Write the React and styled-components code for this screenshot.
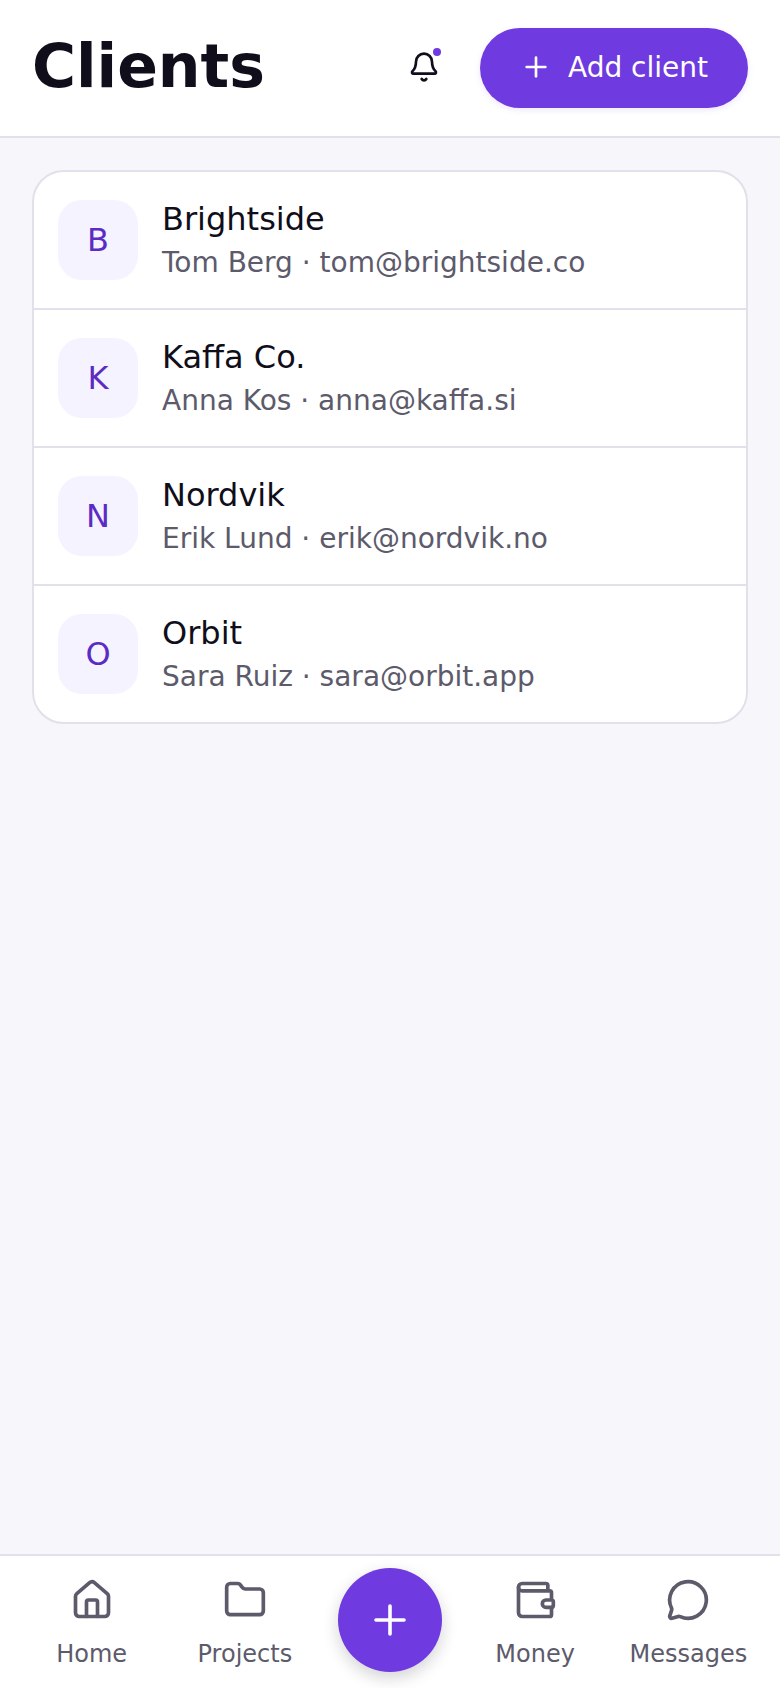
import React from "react";
import styled, { createGlobalStyle } from "styled-components";
import { Bell, Plus, House, Folder, Wallet, MessageCircle } from "lucide-react";

const Global = createGlobalStyle`
  html, body { margin: 0; padding: 0; }
  body { font-family: "DejaVu Sans", sans-serif; background: #f7f6fb; }
  * { box-sizing: border-box; }
`;
const Page = styled.div`
  width: 780px; height: 1688px; display: flex; flex-direction: column; background: #f7f6fb;
`;
const Header = styled.header`
  height: 138px; flex: none; display: flex; align-items: center; padding: 0 32px;
  background: #fff; border-bottom: 2px solid #e2e0ea;
`;
const Title = styled.h1`
  margin: 0 0 4px; flex: 1; font-size: 60px; line-height: 72px; font-weight: 700; color: #100e1a;
`;
const BellButton = styled.div`
  position: relative; width: 72px; height: 72px; margin-right: 20px; padding-bottom: 2px;
  display: flex; align-items: center; justify-content: center; color: #100e1a;
`;
const Dot = styled.span`
  position: absolute; left: 45px; top: 16px; width: 8px; height: 8px; border-radius: 50%; background: #6f3adf;
`;
const AddButton = styled.button`
  width: 268px; height: 80px; border: 0; border-radius: 40px; background: #6f3adf; color: #fff;
  display: flex; align-items: center; justify-content: center; gap: 16px;
  font: 500 28px "DejaVu Sans", sans-serif; box-shadow: 0 2px 6px rgba(111, 58, 223, 0.12); padding: 0 0 2px;
`;
const Content = styled.main`
  flex: 1; padding: 32px;
`;
const Card = styled.section`
  background: #fff; border: 2px solid #e2e0ea; border-radius: 32px; overflow: hidden;
`;
const Row = styled.div`
  height: 136px; display: flex; align-items: center; gap: 24px; padding: 0 24px;
  & + & { height: 138px; border-top: 2px solid #e2e0ea; }
`;
const Avatar = styled.div`
  width: 80px; height: 80px; flex: none; border-radius: 24px; background: #f5f3ff; color: #5b2bc4;
  display: flex; align-items: center; justify-content: center; font-size: 32px; padding-bottom: 1px;
`;
const Info = styled.div`
  display: flex; flex-direction: column; gap: 4px; padding-top: 2px;
`;
const Name = styled.div`
  font-size: 32px; line-height: 40px; color: #100e1a;
`;
const Detail = styled.div`
  font-size: 28px; line-height: 40px; color: #5c5a6b;
`;
const Nav = styled.nav`
  height: 134px; flex: none; background: #fff; border-top: 2px solid #e2e0ea;
  display: grid; grid-template-columns: 1fr 1fr 137px 1fr 1fr; padding: 0 15px; align-items: start;
`;
const NavItem = styled.div`
  display: flex; flex-direction: column; align-items: center; gap: 16px; padding-top: 22px;
  color: #5c5a6b; font-size: 24px; line-height: 32px; white-space: nowrap;
`;
const FabCell = styled.div`
  display: flex; justify-content: center; padding-top: 12px;
`;
const Fab = styled.button`
  width: 104px; height: 104px; border: 0; border-radius: 50%; background: #6f3adf; color: #fff; padding: 0;
  display: flex; align-items: center; justify-content: center; box-shadow: 0 6px 16px rgba(16, 14, 26, 0.18);
`;

const clients = [
  ["B", "Brightside", "Tom Berg · tom@brightside.co"],
  ["K", "Kaffa Co.", "Anna Kos · anna@kaffa.si"],
  ["N", "Nordvik", "Erik Lund · erik@nordvik.no"],
  ["O", "Orbit", "Sara Ruiz · sara@orbit.app"],
];

export default function App() {
  return (
    <Page>
      <Global />
      <Header>
        <Title>Clients</Title>
        <BellButton><Bell size={32} strokeWidth={2} /><Dot /></BellButton>
        <AddButton><Plus size={32} strokeWidth={2} />Add client</AddButton>
      </Header>
      <Content>
        <Card>
          {clients.map(([l, n, d]) => (
            <Row key={n}>
              <Avatar>{l}</Avatar>
              <Info><Name>{n}</Name><Detail>{d}</Detail></Info>
            </Row>
          ))}
        </Card>
      </Content>
      <Nav>
        <NavItem><House size={44} strokeWidth={2} />Home</NavItem>
        <NavItem><Folder size={44} strokeWidth={2} />Projects</NavItem>
        <FabCell><Fab><Plus size={48} strokeWidth={1.8} /></Fab></FabCell>
        <NavItem><Wallet size={44} strokeWidth={2} />Money</NavItem>
        <NavItem><MessageCircle size={44} strokeWidth={2} />Messages</NavItem>
      </Nav>
    </Page>
  );
}
